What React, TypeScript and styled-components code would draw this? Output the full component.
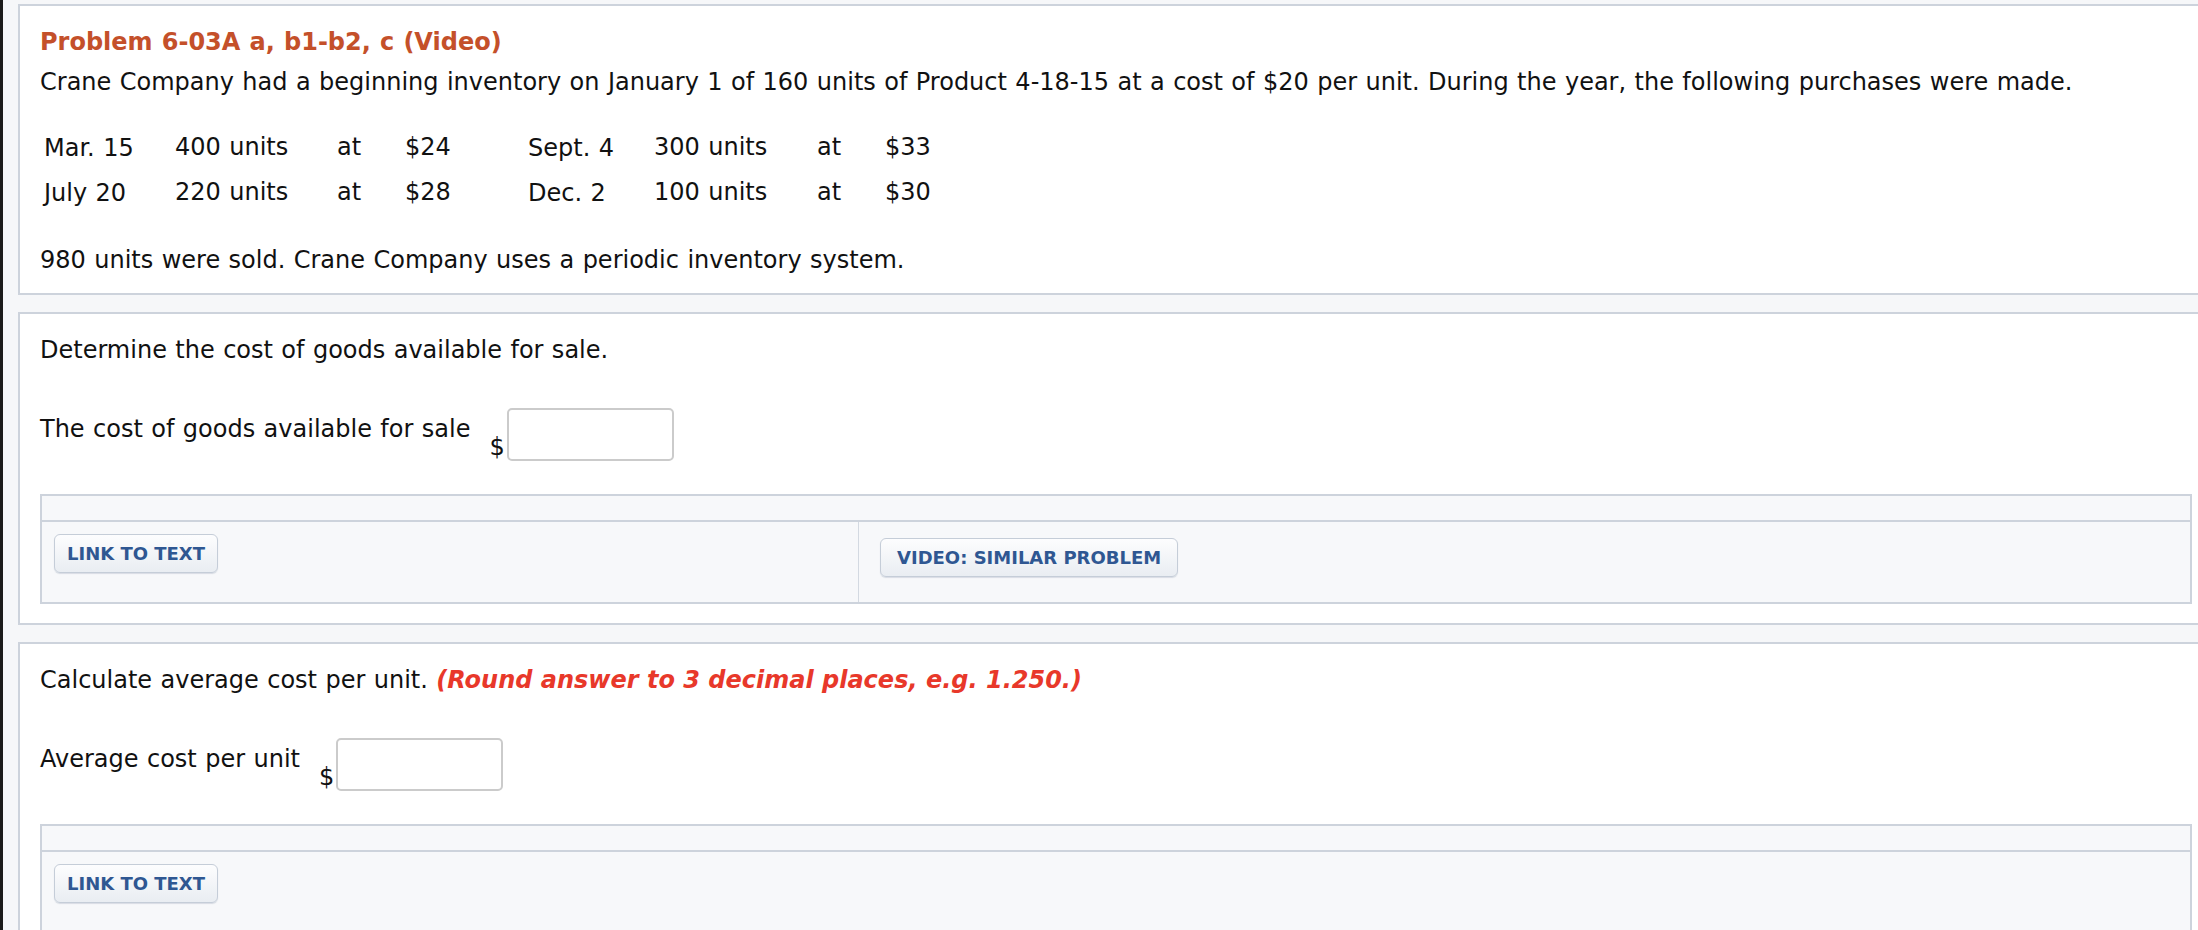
import { FC, ReactNode } from 'react';
import styled, { createGlobalStyle } from 'styled-components';

const GlobalStyle = createGlobalStyle`
  html, body {
    margin: 0;
    padding: 0;
    overflow: hidden;
    background: #f6f7f9;
  }
  body {
    font-family: 'DejaVu Sans', Verdana, sans-serif;
    color: #111;
  }
`;

const Page = styled.div`
  min-height: 100vh;
  box-sizing: border-box;
  border-left: 3px solid #1b1b1b;
  padding: 4px 0 0 15px;
  display: flex;
  flex-direction: column;
  gap: 17px;
  overflow: hidden;
`;

const Card = styled.section`
  width: calc(100% + 16px);
  box-sizing: border-box;
  background: #fff;
  border: 2px solid #cdd3dc;
  padding: 22px 20px 19px 20px;
  font-size: 24px;
  line-height: 28px;
  word-spacing: 0.8px;
`;

const Title = styled.h2`
  margin: 0 0 12px;
  font-size: 24px;
  line-height: 28px;
  font-weight: bold;
  color: #c4502a;
`;

const Para = styled.p<{ $gap?: number }>`
  margin: ${p => p.$gap ?? 0}px 0 0;
`;

const Hint = styled.em`
  color: #e8382a;
  font-weight: bold;
  word-spacing: 0;
`;

const Purchases = styled.div`
  margin-top: 28px;
  display: grid;
  grid-template-columns: 131px 162px 68px 123px 126px 163px 68px auto;
  grid-auto-rows: 45px;
  align-items: center;
`;

const Cell = styled.div<{ $date?: boolean }>`
  padding: ${p => (p.$date ? '3px' : '0')} 0 0 4px;
  white-space: nowrap;
`;

const AnswerRow = styled.div`
  margin-top: 44px;
  display: flex;
  align-items: flex-start;
`;

const Label = styled.span`
  margin-top: 7px;
  margin-right: 19px;
`;

const Money = styled.span`
  display: flex;
  align-items: flex-end;
  gap: 2px;
`;

const AmountInput = styled.input`
  width: 167px;
  height: 53px;
  box-sizing: border-box;
  border: 2px solid #cbcbcb;
  border-radius: 5px;
  background: #fff;
  font: inherit;
  padding: 0 8px;
  outline: none;
`;

const LinkTable = styled.div`
  margin-top: 33px;
  border: 2px solid #cdd3dc;
  background: #f7f8fa;
`;

const LinkHead = styled.div`
  height: 24px;
  border-bottom: 2px solid #cdd3dc;
`;

const LinkRow = styled.div`
  display: flex;
  height: 80px;
`;

const LinkCell = styled.div<{ $width?: number; $pad: string }>`
  box-sizing: border-box;
  width: ${p => (p.$width ? `${p.$width}px` : 'auto')};
  flex: ${p => (p.$width ? 'none' : '1')};
  padding: ${p => p.$pad};
  & + & {
    border-left: 1px solid #d3d9e1;
  }
`;

const LinkButton = styled.button<{ $wide?: boolean }>`
  height: 39px;
  padding: 0 ${p => (p.$wide ? '16px' : '12px')};
  border: 1px solid #c5cdd8;
  border-radius: 6px;
  background: linear-gradient(to bottom, #fdfdfe, #e9edf2);
  box-shadow: 0 1px 1px rgba(120, 135, 160, 0.25);
  color: #2f5792;
  font-family: 'DejaVu Sans', Verdana, sans-serif;
  font-size: 18px;
  font-weight: bold;
  word-spacing: 0;
  cursor: pointer;
`;

const purchases = [
  ['Mar. 15', '400 units', 'at', '$24', 'Sept. 4', '300 units', 'at', '$33'],
  ['July 20', '220 units', 'at', '$28', 'Dec. 2', '100 units', 'at', '$30']
];

const Answer: FC<{ label: string }> = ({ label }) => (
  <AnswerRow>
    <Label>{label}</Label>
    <Money>
      <span>$</span>
      <AmountInput type="text" />
    </Money>
  </AnswerRow>
);

const Links: FC<{ video?: boolean }> = ({ video }) => (
  <LinkTable>
    <LinkHead />
    <LinkRow>
      <LinkCell $width={video ? 816 : undefined} $pad="12px 12px">
        <LinkButton>LINK TO TEXT</LinkButton>
      </LinkCell>
      {video && (
        <LinkCell $pad="16px 21px">
          <LinkButton $wide>VIDEO: SIMILAR PROBLEM</LinkButton>
        </LinkCell>
      )}
    </LinkRow>
  </LinkTable>
);

const Question: FC<{ prompt: ReactNode; label: string; video?: boolean }> = ({
  prompt,
  label,
  video
}) => (
  <Card>
    <Para>{prompt}</Para>
    <Answer label={label} />
    <Links video={video} />
  </Card>
);

const App: FC = () => (
  <>
    <GlobalStyle />
    <Page>
      <Card>
        <Title>Problem 6-03A a, b1-b2, c (Video)</Title>
        <Para>
          Crane Company had a beginning inventory on January 1 of 160 units of
          Product 4-18-15 at a cost of $20 per unit. During the year, the
          following purchases were made.
        </Para>
        <Purchases>
          {purchases.map(row =>
            row.map((text, i) => (
              <Cell key={`${row[0]}-${i}`} $date={i === 0 || i === 4}>
                {text}
              </Cell>
            ))
          )}
        </Purchases>
        <Para $gap={32}>
          980 units were sold. Crane Company uses a periodic inventory system.
        </Para>
      </Card>
      <Question
        prompt="Determine the cost of goods available for sale."
        label="The cost of goods available for sale"
        video
      />
      <Question
        prompt={
          <>
            Calculate average cost per unit.{' '}
            <Hint>(Round answer to 3 decimal places, e.g. 1.250.)</Hint>
          </>
        }
        label="Average cost per unit"
      />
    </Page>
  </>
);

export default App;
